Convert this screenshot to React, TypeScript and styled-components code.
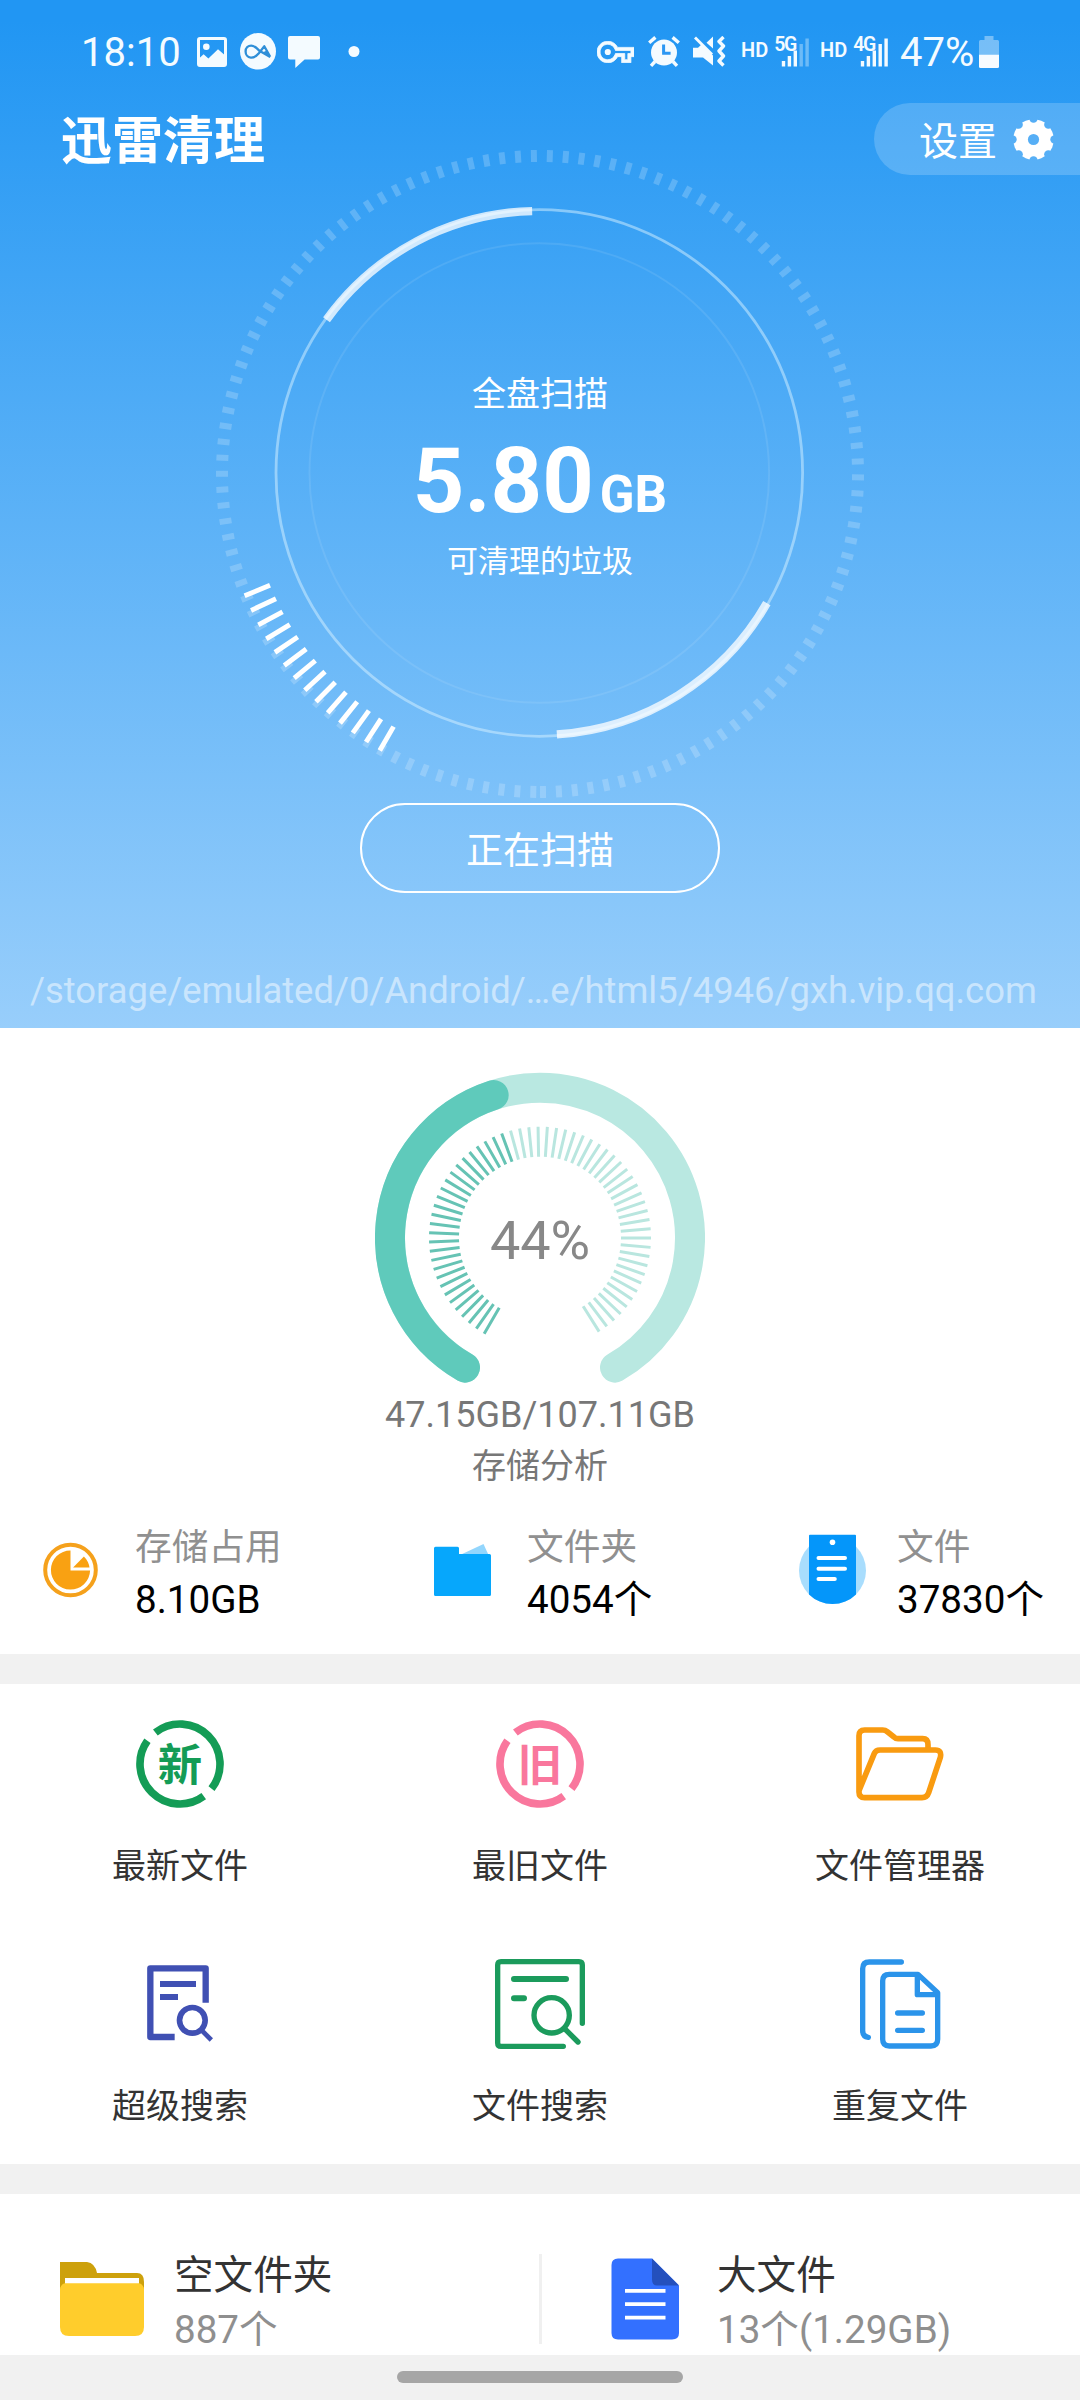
import React from "react";
import styled, { createGlobalStyle } from "styled-components";

const GlobalStyle = createGlobalStyle`
  * { box-sizing: border-box; }
  body {
    margin: 0;
    background: #f1f1f1;
    font-family: Roboto, "Noto Sans CJK SC", sans-serif;
  }
  svg { display: block; flex: none; }
`;

const Screen = styled.div`
  width: 1080px;
  height: 2400px;
  overflow: hidden;
  display: flex;
  flex-direction: column;
`;

/* ---------- hero ---------- */

const Hero = styled.header`
  height: 1028px;
  display: flex;
  flex-direction: column;
  color: #fff;
  background: linear-gradient(180deg, #2196f3 0%, #2196f3 2%, #98cefb 100%);
`;

const StatusBar = styled.div`
  height: 103px;
  padding: 0 81px 0 81px;
  display: flex;
  align-items: center;
  justify-content: space-between;
`;

const StatusGroup = styled.div`
  display: flex;
  align-items: center;
  color: #f4fbff;
`;

const Slot = styled.span<{ $w: number; $gap?: number }>`
  width: ${(p) => p.$w}px;
  margin-left: ${(p) => p.$gap ?? 0}px;
  flex: none;
`;

const StatusText = styled(Slot)`
  font-size: 40px;
  line-height: 46px;
  white-space: nowrap;
  padding-top: 3px;
`;

const HdText = styled(Slot)`
  font-size: 20px;
  line-height: 24px;
  font-weight: 600;
  margin-top: -4px;
`;

const TitleRow = styled.div`
  height: 72px;
  flex: none;
  padding-left: 61px;
  display: flex;
  align-items: center;
  justify-content: space-between;
`;

const Title = styled.h1`
  margin: 6px 0 0;
  font-size: 51px;
  line-height: 60px;
  font-weight: 700;
`;

const SettingsButton = styled.div`
  width: 206px;
  height: 72px;
  padding-left: 45px;
  display: flex;
  align-items: center;
  gap: 16px;
  border-radius: 36px 0 0 36px;
  background: rgba(255, 255, 255, 0.19);
  font-size: 39px;
  line-height: 46px;

  span { padding-top: 5px; }
`;

const Dial = styled.div`
  width: 650px;
  height: 650px;
  margin: -26px auto 0;
  flex: none;
  display: grid;

  > * { grid-area: 1 / 1; }
`;

const DialText = styled.div`
  padding-top: 220px;
  display: flex;
  flex-direction: column;
  align-items: center;
`;

const DialCaption = styled.div<{ $size: number; $line: number }>`
  font-size: ${(p) => p.$size}px;
  line-height: ${(p) => p.$line}px;
`;

const JunkSize = styled.div`
  display: flex;
  align-items: baseline;
  gap: 6px;
  margin: 13px 0 8px;
  font-size: 90px;
  line-height: 100px;
  font-weight: 700;

  small { font-size: 51px; line-height: 60px; }
`;

const ScanButton = styled.div`
  width: 360px;
  height: 90px;
  margin: 4px auto 0;
  flex: none;
  display: flex;
  align-items: center;
  justify-content: center;
  border: 2px solid #fff;
  border-radius: 45px;
  font-size: 37px;
`;

const ScanPath = styled.div`
  margin-top: 76px;
  padding-left: 30px;
  font-size: 36.4px;
  line-height: 44px;
  white-space: nowrap;
  color: rgba(255, 255, 255, 0.5);
`;

/* ---------- storage ---------- */

const Panel = styled.section<{ $h: number }>`
  height: ${(p) => p.$h}px;
  flex: none;
  background: #fff;
`;

const Divider = styled.div`
  height: 30px;
  flex: none;
  background: #f1f1f1;
`;

const GaugeBlock = styled.div`
  padding-top: 44px;
  display: flex;
  flex-direction: column;
  align-items: center;
  color: #777;
`;

const Usage = styled.div`
  margin-top: 9px;
  font-size: 36px;
  line-height: 44px;
`;

const GaugeLabel = styled.div`
  margin-top: 7px;
  font-size: 34px;
  line-height: 44px;
`;

const Stats = styled.div`
  margin-top: 33px;
  padding-left: 43px;
  display: grid;
  grid-template-columns: 391px 365px 1fr;
`;

const Stat = styled.div`
  display: flex;
`;

const StatIcon = styled.div<{ $w: number }>`
  width: ${(p) => p.$w}px;
`;

const StatLabel = styled.div`
  padding-top: 1px;
  font-size: 36.7px;
  line-height: 52px;
  color: #909090;
`;

const StatValue = styled.div`
  font-size: 38.6px;
  line-height: 52px;
  color: #000;
`;

/* ---------- tools ---------- */

const Tools = styled.div`
  display: grid;
  grid-template-columns: repeat(3, 1fr);
  grid-auto-rows: 240px;
`;

const Tool = styled.div`
  padding-top: 32px;
  display: flex;
  flex-direction: column;
  align-items: center;
`;

const ToolLabel = styled.div`
  margin-top: 31px;
  font-size: 34px;
  line-height: 46px;
  color: #333;
`;

/* ---------- bottom row ---------- */

const Cards = styled.div`
  display: flex;
`;

const Card = styled.div<{ $w: number; $left: number; $gap: number }>`
  width: ${(p) => p.$w}px;
  padding: 54px 0 0 ${(p) => p.$left}px;
  flex: none;
  display: flex;
  gap: ${(p) => p.$gap}px;
`;

const CardRule = styled.div`
  width: 3px;
  height: 90px;
  margin-top: 60px;
  background: #f0f0f0;
`;

const CardTitle = styled.div`
  font-size: 39.6px;
  line-height: 55px;
  color: #333;
`;

const CardSub = styled.div`
  font-size: 38.6px;
  line-height: 52px;
  padding-top: 1px;
  color: #8f8f8f;
`;

const NavBar = styled.footer`
  height: 45px;
  padding-top: 16px;
  background: #f1f1f1;
`;

const Handle = styled.div`
  width: 286px;
  height: 12px;
  margin: 0 auto;
  border-radius: 6px;
  background: #a6a6a6;
`;

/* ---------- drawings ---------- */

const polar = (r: number, deg: number) => {
  const a = (deg * Math.PI) / 180;
  return [r * Math.cos(a), r * Math.sin(a)];
};

const arc = (r: number, from: number, to: number, cx = 0, cy = 0) => {
  const [x1, y1] = polar(r, from);
  const [x2, y2] = polar(r, to);
  return `M${cx + x1} ${cy + y1}A${r} ${r} 0 ${to - from > 180 ? 1 : 0} 1 ${cx + x2} ${cy + y2}`;
};

const ray = (r1: number, r2: number, deg: number) => {
  const [x1, y1] = polar(r1, deg);
  const [x2, y2] = polar(r2, deg);
  return `M${x1} ${y1}L${x2} ${y2}`;
};

const rays = (count: number, r1: number, r2: number, start: number, step: number) =>
  Array.from({ length: count }, (_, i) => ray(r1, r2, start + step * i)).join("");

const DialRings = () => (
  <svg width="650" height="650" viewBox="-325 -325 650 650" fill="none">
    <path d={rays(126, 312, 324, 89.46, -2.866)} stroke="#fff" strokeOpacity="0.2" strokeWidth="6" />
    <circle cx="-0.7" cy="-1" r="263.3" stroke="#d8f1ff" strokeOpacity="0.5" strokeWidth="2.8" />
    <circle cx="-0.7" cy="-1" r="229.8" stroke="#fff" strokeOpacity="0.09" strokeWidth="2" />
    <path d={arc(262, 215.8, 268.5, -1, -1)} stroke="#fff" strokeOpacity="0.76" strokeWidth="8.4" />
    <path d={arc(262, 29.8, 86.2, -0.5, -1)} stroke="#fff" strokeOpacity="0.76" strokeWidth="8.4" />
    <path d={rays(14, 292, 319.5, 120.1, 2.885)} stroke="#fff" strokeWidth="4.9" />
  </svg>
);

const Gauge = () => (
  <svg width="330" height="312" viewBox="-165 -165.7 330 312" fill="none">
    <path d={arc(150, 120, 420)} stroke="#b9e8e1" strokeWidth="30" strokeLinecap="round" />
    <path d={arc(150, 120, 252)} stroke="#5fcabb" strokeWidth="30" strokeLinecap="round" />
    <path d={rays(35, 81, 111, 254.6, 4.8)} stroke="#b9e6df" strokeWidth="3" />
    <path d={rays(28, 81, 111, 120.2, 4.8)} stroke="#66c3b4" strokeWidth="3" />
    <text x="0" y="21" textAnchor="middle" fontSize="54" fill="#888">44%</text>
  </svg>
);

const PhotoIcon = () => (
  <svg width="30" height="30" viewBox="0 0 30 30">
    <rect x="1.5" y="1.5" width="27" height="27" rx="1.5" fill="none" stroke="#f4fbff" strokeWidth="3" />
    <circle cx="9.3" cy="9.8" r="3.3" fill="#f4fbff" />
    <path d="M2 21.5l4.6-4.2 4.8 4.2 9.6-9.3 7.5 6.6V28.5H2z" fill="#f4fbff" />
  </svg>
);

const LoopIcon = () => (
  <svg width="36" height="37" viewBox="0 0 36 37" fill="none">
    <ellipse cx="18" cy="18.3" rx="18" ry="18.3" fill="#f4fbff" />
    <path
      d="M30.2 23.8L24.3 13.2L18.6 20.6C15.8 24 13.4 24.8 10.8 24.6C7.6 24.3 5.6 21.6 5.6 18.4C5.6 14.9 8.2 12.6 11.2 12.6C14.6 12.6 17 15.4 19.4 17.8L30.2 24"
      stroke="#2f8fd8"
      strokeWidth="2.3"
      strokeLinejoin="round"
    />
    <path d="M22.2 19.6L30.6 24.2L27 17.6Z" fill="#2f8fd8" />
  </svg>
);

const ChatIcon = () => (
  <svg width="32" height="32" viewBox="0 0 32 32">
    <path d="M2 0H30a2 2 0 0 1 2 2V21.5a2 2 0 0 1-2 2H16.6L7.3 32V23.5H2a2 2 0 0 1-2-2V2a2 2 0 0 1 2-2z" fill="#f4fbff" />
  </svg>
);

const KeyIcon = () => (
  <svg width="37" height="22" viewBox="0 5 24 14">
    <path
      d="M22 19h-6v-4h-2.68c-1.14 2.42-3.6 4-6.32 4-3.86 0-7-3.14-7-7s3.14-7 7-7c2.72 0 5.17 1.58 6.32 4H24v6h-2v4zm-4-2h2v-4h2v-2H11.94l-.23-.67C11.01 8.34 9.11 7 7 7c-2.76 0-5 2.24-5 5s2.24 5 5 5c2.11 0 4.01-1.34 4.71-3.33l.23-.67H18v4z"
      fill="#f4fbff"
      stroke="#f4fbff"
      strokeWidth="0.5"
    />
    <circle cx="7" cy="12" r="2" fill="#f4fbff" />
  </svg>
);

const AlarmIcon = () => (
  <svg width="32" height="31" viewBox="0 0 32 31" fill="none">
    <circle cx="16" cy="16.5" r="13" fill="#f4fbff" />
    <path d="M1.2 6.8L7.4 1.4M30.8 6.8L24.6 1.4M7 25.5L3 29.8M25 25.5L29 29.8" stroke="#f4fbff" strokeWidth="3.4" />
    <path d="M15.6 8.5V17.2H22.6" stroke="#2b97f3" strokeWidth="3" />
  </svg>
);

const MuteVibrateIcon = () => (
  <svg width="33" height="31" viewBox="0 0 33 31" fill="none">
    <path d="M0 11.8H5L8.5 8.5L20 19.5V29.5L10 21.5H0z" fill="#f4fbff" />
    <path d="M13.5 6.8L20 0.6V12.6z" fill="#f4fbff" />
    <path d="M2 1.5L19 18.500" stroke="#f4fbff" strokeWidth="2.8" />
    <path
      d="M30.5 1L26 5.5L30.5 10L26 15L30.5 20L26 25L30.5 29.5"
      stroke="#f4fbff"
      strokeWidth="3.4"
      strokeLinejoin="round"
    />
  </svg>
);

const Signal = ({ label, level }: { label: string; level: number }) => (
  <svg width="40" height="44" viewBox="-2 -6 40 44">
    {[25, 20, 14.5, 8, 2.5].map((y, i) => (
      <rect key={y} x={7.8 + i * 5.9} y={y} width="3.4" height={30.5 - y} fill="#f4fbff" opacity={i < level ? 1 : 0.35} />
    ))}
    <text x="0.2" y="15" fontSize="19.5" fontWeight="600" textLength="23" fill="#f4fbff">{label}</text>
  </svg>
);

const BatteryIcon = () => (
  <svg width="20" height="32" viewBox="0 0 20 32">
    <path d="M5.5 0h9v4H18.5a1.5 1.5 0 0 1 1.5 1.5V19H0V5.5A1.5 1.5 0 0 1 1.5 4h4z" fill="#fff" opacity="0.38" />
    <path d="M0 18.7H20V30.5a1.5 1.5 0 0 1-1.5 1.5h-17A1.5 1.5 0 0 1 0 30.5z" fill="#f7fbff" />
  </svg>
);

const GearIcon = () => (
  <svg width="41" height="41" viewBox="-20.5 -20.5 41 41">
    <mask id="gear">
      <circle r="20.3" fill="#fff" />
      {Array.from({ length: 8 }, (_, i) => {
        const [x, y] = polar(21, i * 45);
        return <circle key={i} cx={x} cy={y} r="4.2" fill="#000" />;
      })}
      <circle r="5.6" fill="#000" />
    </mask>
    <rect x="-20.5" y="-20.5" width="41" height="41" fill="#fff" mask="url(#gear)" />
  </svg>
);

const PieIcon = () => (
  <svg width="55" height="104" viewBox="-27.5 -49 55 104">
    <circle r="25.3" fill="none" stroke="#f5a11c" strokeWidth="4" />
    <path d="M0 0V-19.6A19.6 19.6 0 1 0 19.6 0.6H0z" fill="#f9a112" />
    <path d="M2.6 -2.4L13.4 -13.6A19.4 19.4 0 0 1 19 -2.4z" fill="#f9a112" />
  </svg>
);

const BlueFolderIcon = () => (
  <svg width="57" height="104" viewBox="0 -23 57 104">
    <path d="M26 11L49.5 0L55 12z" fill="#93d6fd" />
    <path
      d="M1.5 2.8H23.5a1.5 1.5 0 0 1 1.5 1.5V10H55.5A1.5 1.5 0 0 1 57 11.5V50.5a1.5 1.5 0 0 1-1.5 1.5h-54A1.5 1.5 0 0 1 0 50.5V4.3a1.5 1.5 0 0 1 1.5-1.5z"
      fill="#06a7fc"
    />
  </svg>
);

const NoteIcon = () => (
  <svg width="67" height="104" viewBox="-33.5 -49.5 67 104" fill="none">
    <circle r="33.5" fill="#a8ddfd" />
    <path d="M-23.5 -34.8a1 1 0 0 1 1-1H22.5a1 1 0 0 1 1 1V23.9A33.5 33.5 0 0 1 -23.5 23.9z" fill="#0496fa" />
    <circle cy="-28.3" r="2.8" fill="#fff" />
    <path d="M-14 -12.5H12.5M-14 -1.8H12.5M-14 8.5H2.3" stroke="#fff" strokeWidth="4" strokeLinecap="round" />
  </svg>
);

const RingIcon = ({ char, color }: { char: string; color: string }) => (
  <svg width="96" height="96" viewBox="-144 -144 288 288" fill="none">
    <g stroke={color} strokeWidth="23">
      <path d={arc(120, 232, 398)} />
      <path d={arc(120, 53.6, 215.5)} />
    </g>
    <text
      x="0"
      y="50"
      textAnchor="middle"
      fontSize="133"
      fontWeight="700"
      fontFamily='"Noto Sans CJK SC", sans-serif'
      fill={color}
    >
      {char}
    </text>
  </svg>
);

const FolderOutlineIcon = () => (
  <svg width="96" height="96" viewBox="276 78 288 288" fill="none" stroke="#f99b10" strokeWidth="17" strokeLinejoin="round">
    <path d="M504 174V164Q504 146 488 146H414Q407 146 402 141L382 125Q376 120 368 120H314Q297 120 297 137V306Q297 323 314 323H486Q501 323 506 308L541 202Q546 180 526 180H360Q347 180 343 190L297 302" />
  </svg>
);

const SuperSearchIcon = () => (
  <svg width="96" height="96" viewBox="96 78 288 288" fill="none" stroke="#4050b3">
    <path d="M224 321H151V115H317V218" strokeWidth="19" strokeLinejoin="round" />
    <path d="M180 162H288M180 201H234" strokeWidth="18" />
    <circle cx="277" cy="271" r="38.5" strokeWidth="17" />
    <path d="M304 300L334 330" strokeWidth="14" />
  </svg>
);

const FileSearchIcon = () => (
  <svg width="96" height="96" viewBox="1176 78 288 288" fill="none" stroke="#1b9b5c" strokeWidth="16" strokeLinecap="round">
    <path d="M1390 349H1203Q1193 349 1193 339V105Q1193 95 1203 95H1437Q1447 95 1447 105V280" />
    <path d="M1242 147H1398M1242 205H1272" strokeWidth="18" />
    <circle cx="1355" cy="256" r="53" />
    <path d="M1396 298L1434 336" />
  </svg>
);

const DuplicateIcon = () => (
  <svg width="96" height="96" viewBox="276 798 288 288" fill="none" stroke="#2b94ea" strokeWidth="16" strokeLinecap="round" strokeLinejoin="round">
    <path d="M424 816H328Q308 816 308 836V1022Q308 1040 325 1042" />
    <path d="M388 853H474L533 908V1048Q533 1068 513 1068H388Q368 1068 368 1048V873Q368 853 388 853z" />
    <path d="M472 856V914H531M413 969H487M413 1021H487" />
  </svg>
);

const YellowFolderIcon = () => (
  <svg width="84" height="107" viewBox="0 -14 84 107">
    <path d="M0 0H27Q35 1 37 11H77Q84 11 84 20V32H0z" fill="#cda10c" />
    <rect x="5" y="16" width="74" height="8" fill="#fff" />
    <path d="M5 21.3H79Q83 22 84 27V65Q84 74 75 74H9Q0 74 0 65V27Q1 22 5 21.3z" fill="#ffcd2c" />
  </svg>
);

const BlueFileIcon = () => (
  <svg width="68" height="107" viewBox="0 -10.6 68 107">
    <path d="M7 0H41L68 27V74.5Q68 81 61 81H7Q0.5 81 0.5 74.5V6.5Q0.5 0 7 0z" fill="#3370ff" />
    <path d="M41 0L68 27H46Q41 27 41 21z" fill="#2450bd" />
    <path d="M14 32.3H54.5M14 45.6H54.5M14 59H54.5" stroke="#fff" strokeWidth="3.8" />
  </svg>
);

/* ---------- data ---------- */

const stats = [
  { label: "存储占用", value: "8.10GB", icon: <PieIcon />, slot: 92 },
  { label: "文件夹", value: "4054个", icon: <BlueFolderIcon />, slot: 93 },
  { label: "文件", value: "37830个", icon: <NoteIcon />, slot: 98 },
];

const tools = [
  { label: "最新文件", icon: <RingIcon char="新" color="#149c56" /> },
  { label: "最旧文件", icon: <RingIcon char="旧" color="#f9779d" /> },
  { label: "文件管理器", icon: <FolderOutlineIcon /> },
  { label: "超级搜索", icon: <SuperSearchIcon /> },
  { label: "文件搜索", icon: <FileSearchIcon /> },
  { label: "重复文件", icon: <DuplicateIcon /> },
];

export default function App() {
  return (
    <Screen>
      <GlobalStyle />
      <Hero>
        <StatusBar>
          <StatusGroup>
            <StatusText $w={116}>18:10</StatusText>
            <Slot $w={30}><PhotoIcon /></Slot>
            <Slot $w={36} $gap={13}><LoopIcon /></Slot>
            <Slot $w={32} $gap={12}><ChatIcon /></Slot>
            <Slot $w={12} $gap={28}>
              <svg width="12" height="12" viewBox="0 0 12 12"><circle cx="6" cy="5.5" r="5.5" fill="#f4fbff" /></svg>
            </Slot>
          </StatusGroup>
          <StatusGroup>
            <Slot $w={37}><KeyIcon /></Slot>
            <Slot $w={32} $gap={14}><AlarmIcon /></Slot>
            <Slot $w={33} $gap={13}><MuteVibrateIcon /></Slot>
            <HdText $w={26} $gap={15}>HD</HdText>
            <Slot $w={40} $gap={5}><Signal label="5G" level={3} /></Slot>
            <HdText $w={26} $gap={8}>HD</HdText>
            <Slot $w={40} $gap={5}><Signal label="4G" level={5} /></Slot>
            <StatusText $w={79} $gap={9}>47%</StatusText>
            <Slot $w={20}><BatteryIcon /></Slot>
          </StatusGroup>
        </StatusBar>
        <TitleRow>
          <Title>迅雷清理</Title>
          <SettingsButton>
            <span>设置</span>
            <GearIcon />
          </SettingsButton>
        </TitleRow>
        <Dial>
          <DialRings />
          <DialText>
            <DialCaption $size={34} $line={50}>全盘扫描</DialCaption>
            <JunkSize>5.80<small>GB</small></JunkSize>
            <DialCaption $size={31} $line={44}>可清理的垃圾</DialCaption>
          </DialText>
        </Dial>
        <ScanButton>正在扫描</ScanButton>
        <ScanPath>/storage/emulated/0/Android/…e/html5/4946/gxh.vip.qq.com</ScanPath>
      </Hero>

      <Panel $h={626}>
        <GaugeBlock>
          <Gauge />
          <Usage>47.15GB/107.11GB</Usage>
          <GaugeLabel>存储分析</GaugeLabel>
        </GaugeBlock>
        <Stats>
          {stats.map((s) => (
            <Stat key={s.label}>
              <StatIcon $w={s.slot}>{s.icon}</StatIcon>
              <div>
                <StatLabel>{s.label}</StatLabel>
                <StatValue>{s.value}</StatValue>
              </div>
            </Stat>
          ))}
        </Stats>
      </Panel>
      <Divider />
      <Panel $h={480}>
        <Tools>
          {tools.map((t) => (
            <Tool key={t.label}>
              {t.icon}
              <ToolLabel>{t.label}</ToolLabel>
            </Tool>
          ))}
        </Tools>
      </Panel>
      <Divider />
      <Panel $h={161}>
        <Cards>
          <Card $w={539} $left={60} $gap={30}>
            <YellowFolderIcon />
            <div>
              <CardTitle>空文件夹</CardTitle>
              <CardSub>887个</CardSub>
            </div>
          </Card>
          <CardRule />
          <Card $w={538} $left={69} $gap={38}>
            <BlueFileIcon />
            <div>
              <CardTitle>大文件</CardTitle>
              <CardSub>13个(1.29GB)</CardSub>
            </div>
          </Card>
        </Cards>
      </Panel>
      <NavBar>
        <Handle />
      </NavBar>
    </Screen>
  );
}
